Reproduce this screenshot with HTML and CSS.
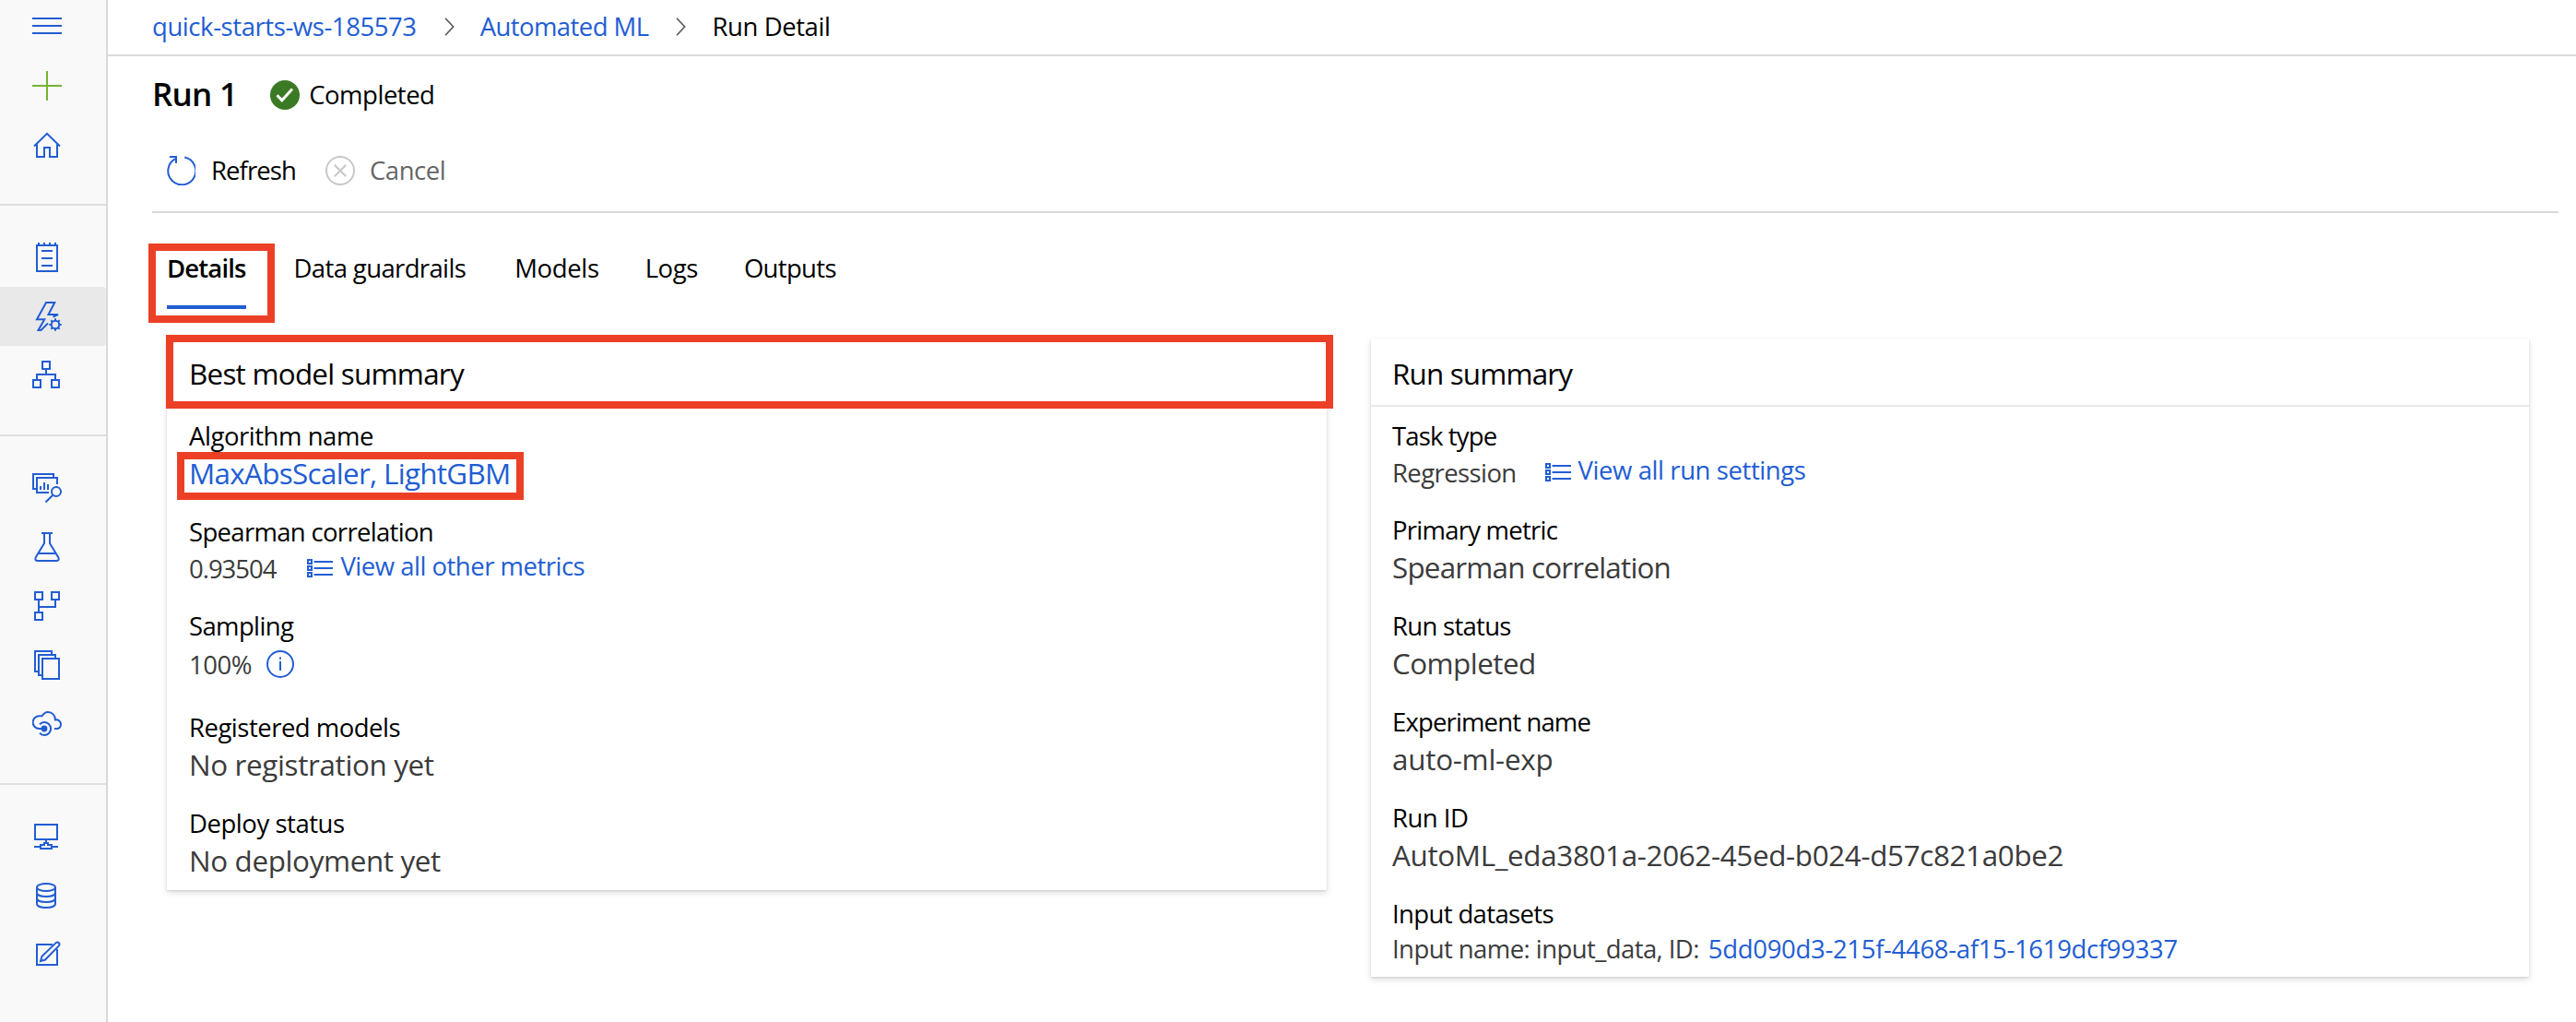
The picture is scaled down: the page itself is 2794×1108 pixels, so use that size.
FILE: index.html
```html
<!DOCTYPE html>
<html lang="en">
<head>
<meta charset="utf-8">
<title>Run Detail</title>
<link rel="stylesheet" href="styles.css">
</head>
<body>
<div class="app">
  <nav class="sidebar">
    <div class="nav-group nav-top">
      <a class="nav-item nav-menu"><svg class="icon" viewBox="0 0 32 32"><path d="M0 8H32M0 16H32M0 24H32"/></svg></a>
      <a class="nav-item nav-new"><svg class="icon" viewBox="0 0 32 32"><path d="M0 16H32M16 0V32"/></svg></a>
      <a class="nav-item"><svg class="icon" viewBox="0 0 32 32"><path d="M2 17.5L16 3.8L30 17.5M5 15.5V29H13V19H19V29H27V15.5"/></svg></a>
    </div>
    <div class="nav-group">
      <a class="nav-item"><svg class="icon" viewBox="0 0 32 32"><path d="M5 3H27V31H5ZM7 0V3M13 0V3M19 0V3M25 0V3M10 9H22M10 17H22M10 25H22"/></svg></a>
      <a class="nav-item active"><svg class="icon" viewBox="0 0 32 32"><path d="M22.5 16.5L28 14H17.5L24.3 1H15L5 19.2H13.3L6.5 31H9.5L17 23.5"/><circle cx="25" cy="25" r="4.2"/><path d="M25 18.3V20.6M25 29.4V31.7M18.3 25H20.6M29.4 25H31.7M20.3 20.3L21.9 21.9M28.1 28.1L29.7 29.7M20.3 29.7L21.9 28.1M28.1 21.9L29.7 20.3"/></svg></a>
      <a class="nav-item"><svg class="icon" viewBox="0 0 32 32"><path d="M11 1H19V9H11ZM15 10V15M5 20V15H25V20M1 21H9V29H1ZM21 21H29V29H21Z"/></svg></a>
    </div>
    <div class="nav-group">
      <a class="nav-item"><svg class="icon" viewBox="0 0 32 32"><path d="M5 17H1V1H23V5M18 21H5V5H27V12M9 14V18M13 10V18M17 12V18"/><circle cx="26" cy="20" r="5"/><path d="M22.3 23.7L14.5 31.5"/></svg></a>
      <a class="nav-item"><svg class="icon" viewBox="0 0 32 32"><path d="M10 1H22M13 1V12L3.6 27.5Q2.4 31 6 31H26Q29.6 31 28.4 27.5L19 12V1M6.5 23H25.5"/></svg></a>
      <a class="nav-item"><svg class="icon" viewBox="0 0 32 32"><path d="M3 1H11V9H3ZM21 1H29V9H21ZM3 23H11V31H3ZM7 10V22M7 17H25V10"/></svg></a>
      <a class="nav-item"><svg class="icon" viewBox="0 0 32 32"><path d="M11 9H29V31H11ZM10 27H7V5H25V8M6 23H3V1H21V4"/></svg></a>
      <a class="nav-item"><svg class="icon" viewBox="0 0 32 32"><path d="M9 21H7.5A6.7 6.7 0 0 1 7.5 7.3H10.5C12.5 4.2 14.5 3 17 3C21.5 3 25 6.5 25 11.4C28.5 10.9 31 13.4 31 16.3C31 19.2 29 21 26.5 21H24M8 16.2A7 7 0 1 1 8 25.8M9 21H13"/><circle class="solid" cx="13" cy="21" r="3.4"/></svg></a>
    </div>
    <div class="nav-group">
      <a class="nav-item"><svg class="icon" viewBox="0 0 32 32"><path d="M3 3H27V19H3ZM15 20V23M2 27H9M21 27H28M9 25H13V23H17V25H21V29H9Z"/></svg></a>
      <a class="nav-item"><svg class="icon" viewBox="0 0 32 32"><ellipse cx="15" cy="7" rx="10" ry="4"/><path d="M5 7V25C5 30.3 25 30.3 25 25V7M5 13C5 18.3 25 18.3 25 13M5 19C5 24.3 25 24.3 25 19"/></svg></a>
      <a class="nav-item"><svg class="icon" viewBox="0 0 32 32"><path d="M22 5H5V27H27V10"/><path d="M9 23L10.5 17.8L25.4 3.4Q27.5 1.8 28.9 3.2Q30.2 4.8 28.6 6.6L14 21.5Z"/></svg></a>
    </div>
  </nav>

  <main class="main">
    <header class="breadcrumb">
      <a class="link ls-42">quick-starts-ws-185573</a>
      <svg class="chevron" viewBox="0 0 11 20"><path d="M1 .7L9.7 10L1 19.3"/></svg>
      <a class="link ls-57">Automated ML</a>
      <svg class="chevron" viewBox="0 0 11 20"><path d="M1 .7L9.7 10L1 19.3"/></svg>
      <span class="ls-42">Run Detail</span>
    </header>

    <div class="title-row">
      <h1 class="title ls-75">Run 1</h1>
      <svg class="icon status-icon" viewBox="0 0 32 32"><circle cx="16" cy="16" r="16"/><path d="M7.5 16.3L12.8 21.7L24 9.5"/></svg>
      <span class="ls-48">Completed</span>
    </div>

    <div class="toolbar">
      <button class="command"><svg class="icon" viewBox="0 0 32 32"><path d="M20.2 1.6A15 15 0 1 1 10 3.2M4 1H11V8"/></svg><span class="ls-92">Refresh</span></button>
      <button class="command disabled"><svg class="icon" viewBox="0 0 32 32"><circle cx="16" cy="16" r="15"/><path d="M9.7 9.7L22.3 22.3M22.3 9.7L9.7 22.3"/></svg><span class="ls-42">Cancel</span></button>
    </div>

    <div class="tabs">
      <a class="tab selected ls-86">Details</a>
      <a class="tab tab-guardrails ls-63">Data guardrails</a>
      <a class="tab ls-36">Models</a>
      <a class="tab ls-42">Logs</a>
      <a class="tab ls-68">Outputs</a>
    </div>

    <div class="cards">
      <section class="card card-model">
        <h2 class="card-title ls-75 marked mark-title">Best model summary</h2>
        <div class="card-body">
          <div class="field">
            <div class="label ls-46">Algorithm name</div>
            <div class="value"><a class="link ls-68 marked mark-algorithm">MaxAbsScaler, LightGBM</a></div>
          </div>
          <div class="field">
            <div class="label ls-68">Spearman correlation</div>
            <div class="value small"><span class="ls-102">0.93504</span><a class="link view-link"><svg class="list-icon" viewBox="0 0 28 20"><path d="M1 1H5V5H1ZM1 8H5V12H1ZM1 15H5V19H1ZM7.5 3H28M7.5 10H28M7.5 17H28"/></svg><span class="ls-50">View all other metrics</span></a></div>
          </div>
          <div class="field">
            <div class="label ls-63">Sampling</div>
            <div class="value small sampling"><span class="ls-50">100%</span><svg class="info-icon" viewBox="0 0 30 30"><circle cx="15" cy="15" r="14"/><path d="M15 12V22M15 7.5V9.8"/></svg></div>
          </div>
          <div class="field">
            <div class="label ls-50">Registered models</div>
            <div class="value ls-36">No registration yet</div>
          </div>
          <div class="field">
            <div class="label ls-46">Deploy status</div>
            <div class="value ls-36">No deployment yet</div>
          </div>
        </div>
      </section>

      <section class="card">
        <h2 class="card-title ls-83">Run summary</h2>
        <div class="card-body">
          <div class="field">
            <div class="label ls-86">Task type</div>
            <div class="value small"><span class="ls-60">Regression</span><a class="link view-link settings"><svg class="list-icon" viewBox="0 0 28 20"><path d="M1 1H5V5H1ZM1 8H5V12H1ZM1 15H5V19H1ZM7.5 3H28M7.5 10H28M7.5 17H28"/></svg><span class="ls-42">View all run settings</span></a></div>
          </div>
          <div class="field">
            <div class="label ls-75">Primary metric</div>
            <div class="value ls-80">Spearman correlation</div>
          </div>
          <div class="field">
            <div class="label ls-71">Run status</div>
            <div class="value ls-54">Completed</div>
          </div>
          <div class="field">
            <div class="label ls-86">Experiment name</div>
            <div class="value ls-25">auto-ml-exp</div>
          </div>
          <div class="field">
            <div class="label ls-50">Run ID</div>
            <div class="value ls-35">AutoML_eda3801a-2062-45ed-b024-d57c821a0be2</div>
          </div>
          <div class="field">
            <div class="label ls-63">Input datasets</div>
            <div class="value small datasets"><span class="ls-57">Input name: input_data, ID:</span><a class="link ls-32">5dd090d3-215f-4468-af15-1619dcf99337</a></div>
          </div>
        </div>
      </section>
    </div>
  </main>
</div>
</body>
</html>
```
FILE: styles.css
```css
:root {
  --blue: #225dd3;
  --line: #d9d9d9;
  --red: #ec4026;
}

*, *::after { box-sizing: border-box; }

body {
  margin: 0;
  background: #fff;
  color: #000;
  font: 27.5px/40px "Open Sans", "Noto Sans", sans-serif;
}

.app {
  display: flex;
  height: 1108px;
  overflow: hidden;
}

h1, h2 { margin: 0; font-weight: 400; }

svg { display: block; flex: none; fill: none; stroke: currentColor; stroke-width: 2; }

.link { color: var(--blue); }
.icon { width: 32px; height: 32px; }
.solid { fill: currentColor; stroke: none; }

/* Sidebar */
.sidebar {
  flex: none;
  width: 117px;
  background: #f9f9f9;
  border-right: 2px solid var(--line);
  color: var(--blue);
}

.nav-group { padding: 24px 0 32px; border-bottom: 2px solid #dfdfdf; }
.nav-group:last-child { border-bottom: 0; }
.nav-top { padding-top: 0; }

.nav-item {
  display: flex;
  align-items: center;
  height: 64px;
  padding-left: 35px;
}

.nav-menu { height: 61px; padding-bottom: 5px; }
.nav-new { color: #76b333; }
.active { background: #e9e9e9; border-radius: 0 4px 4px 0; }

/* Header */
.main { flex: 1; min-width: 0; }

.breadcrumb {
  display: flex;
  align-items: center;
  height: 61px;
  padding: 0 0 1px 48px;
  border-bottom: 2px solid var(--line);
}

.chevron { width: 11px; height: 20px; margin: 0 28px 0 30px; color: #555; stroke-width: 1.6; }

.title-row {
  display: flex;
  align-items: center;
  height: 64px;
  margin-top: 10px;
  padding-left: 48px;
}

.title { font-size: 35px; font-weight: 600; padding-bottom: 3px; }
.status-icon { margin: 0 10px 0 36px; }
.status-icon circle { fill: #3a7a24; stroke: none; }
.status-icon path { stroke: #fff; stroke-width: 3; }

.toolbar {
  display: flex;
  align-items: center;
  gap: 32px;
  height: 78px;
  margin: 18px 19px 0 48px;
  padding: 0 0 12px 15px;
  border-bottom: 2px solid var(--line);
}

.command {
  display: flex;
  align-items: center;
  gap: 17px;
  padding: 0;
  border: 0;
  background: none;
  color: #000;
  font: inherit;
}

.command svg { color: var(--blue); }
.disabled { gap: 16px; color: #666; }
.disabled svg { color: #c8c8c8; }

/* Tabs */
.tabs {
  display: flex;
  gap: 50px;
  height: 104px;
  padding: 40px 0 0 64px;
}

.tab { height: 64px; }
.tab-guardrails { margin: 0 3px 0 2px; }

.selected {
  position: relative;
  font-weight: 600;
  border-bottom: 4px solid var(--blue);
}

/* Highlight frames around the tab, card title and algorithm link */
.selected::after,
.marked::after {
  content: "";
  position: absolute;
  border: 8px solid var(--red);
}

.selected::after { left: -20px; top: -7px; width: 137px; height: 86px; }

.marked { position: relative; }
.mark-title::after { left: -1px; top: -4px; width: 1266px; height: 80px; }
.mark-algorithm::after { left: -13px; top: -2px; width: 376px; height: 52px; }

/* Cards */
.cards {
  display: grid;
  grid-template-columns: 1258px 1256px;
  gap: 48px;
  align-items: start;
  margin: 32px 0 0 64px;
}

.card {
  background: #fff;
  box-shadow: 0 3px 7px rgba(0, 0, 0, .13), 0 1px 2px rgba(0, 0, 0, .11);
}

.card-title {
  height: 74px;
  padding-left: 23px;
  border-bottom: 2px solid #e9e9e9;
  font-size: 31.4px;
  line-height: 76px;
}

.card-body {
  display: flex;
  flex-direction: column;
  gap: 22px;
  padding: 11px 23px;
}

.card-model .card-title,
.card-model .card-body { padding-left: 24px; }

.label { height: 40px; line-height: 42px; }

.value {
  display: flex;
  height: 42px;
  color: #3b3b3b;
  font-size: 31.4px;
  line-height: 42px;
}

.small { height: 40px; font-size: 27.5px; line-height: 42px; }

.view-link { display: flex; align-items: center; gap: 8px; margin-left: 34px; }
.view-link span { margin-top: -4px; }
.settings { margin-left: 31px; }
.list-icon { width: 28px; height: 20px; }

.sampling { gap: 16px; height: 48px; line-height: 46px; }
.info-icon { width: 30px; height: 30px; margin-top: 7px; color: var(--blue); }

.datasets { gap: 10px; height: 38px; line-height: 38px; }

/* Tracking steps */
.ls-25 { letter-spacing: -.25px; }
.ls-32 { letter-spacing: -.32px; }
.ls-35 { letter-spacing: -.35px; }
.ls-36 { letter-spacing: -.36px; }
.ls-42 { letter-spacing: -.42px; }
.ls-46 { letter-spacing: -.46px; }
.ls-48 { letter-spacing: -.48px; }
.ls-50 { letter-spacing: -.5px; }
.ls-54 { letter-spacing: -.54px; }
.ls-57 { letter-spacing: -.57px; }
.ls-60 { letter-spacing: -.6px; }
.ls-63 { letter-spacing: -.63px; }
.ls-68 { letter-spacing: -.68px; }
.ls-71 { letter-spacing: -.71px; }
.ls-75 { letter-spacing: -.75px; }
.ls-80 { letter-spacing: -.8px; }
.ls-83 { letter-spacing: -.83px; }
.ls-86 { letter-spacing: -.86px; }
.ls-92 { letter-spacing: -.92px; }
.ls-102 { letter-spacing: -1.02px; }
```
